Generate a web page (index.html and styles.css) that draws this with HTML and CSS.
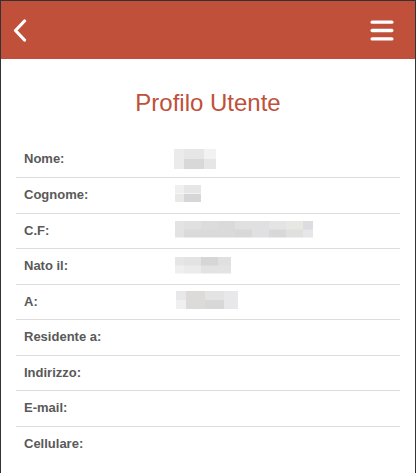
FILE: index.html
```html
<!DOCTYPE html>
<html lang="it">
<head>
<meta charset="utf-8">
<title>Profilo Utente</title>
<link rel="stylesheet" href="styles.css">
</head>
<body>
<div class="frame">
  <header class="topbar">
    <svg class="back" width="14" height="23" viewBox="0 0 14 23" aria-label="Indietro">
      <polyline points="11.5,2 2.5,11.5 11.5,21" fill="none" stroke="#fff" stroke-width="3.2" stroke-linecap="round" stroke-linejoin="round"/>
    </svg>
    <svg class="menu" width="24" height="21" viewBox="0 0 24 21" aria-label="Menu">
      <rect x="0.5" y="0.5" width="23" height="3.3" rx="1.6" fill="#fff"/>
      <rect x="0.5" y="8.85" width="23" height="3.3" rx="1.6" fill="#fff"/>
      <rect x="0.5" y="17.2" width="23" height="3.3" rx="1.6" fill="#fff"/>
    </svg>
  </header>
  <main class="content">
    <h1 class="title">Profilo Utente</h1>
    <table class="profile">
      <tbody>
        <tr><td class="label">Nome:</td><td class="value"><div class="blur blur-nome"></div></td></tr>
        <tr><td class="label">Cognome:</td><td class="value"><div class="blur blur-cognome"></div></td></tr>
        <tr><td class="label">C.F:</td><td class="value"><div class="blur blur-cf"></div></td></tr>
        <tr><td class="label">Nato il:</td><td class="value"><div class="blur blur-nato"></div></td></tr>
        <tr><td class="label">A:</td><td class="value"><div class="blur blur-a"></div></td></tr>
        <tr><td class="label">Residente a:</td><td class="value"></td></tr>
        <tr><td class="label">Indirizzo:</td><td class="value"></td></tr>
        <tr><td class="label">E-mail:</td><td class="value"></td></tr>
        <tr><td class="label">Cellulare:</td><td class="value"></td></tr>
      </tbody>
    </table>
  </main>
</div>
</body>
</html>
```
FILE: styles.css
```css
html, body {
  margin: 0;
  padding: 0;
  background: #fff;
}

body {
  font-family: "Liberation Sans", Arial, sans-serif;
  font-size: 13px;
  line-height: 1.42857;
  color: #555;
}

.frame {
  box-sizing: border-box;
  min-height: 100vh;
  border: 1px solid #333;
  border-bottom: none;
}

.topbar {
  height: 58px;
  background: #c0503a;
  display: flex;
  align-items: center;
  justify-content: space-between;
  padding: 0 21px 0 12px;
}

.topbar svg {
  display: block;
}

.content {
  padding: 0 15px;
}

.title {
  margin: 31px 0 0;
  font-size: 24px;
  line-height: 26px;
  font-weight: normal;
  text-align: center;
  color: #c0503a;
}

.profile {
  width: 100%;
  margin-top: 26px;
  border-collapse: collapse;
  border-spacing: 0;
}

.profile td {
  padding: 8px 8px 8.5px;
  line-height: 18px;
  vertical-align: top;
}

.profile tr + tr td {
  border-top: 1px solid #ddd;
}

.profile .label {
  width: 134px;
  font-weight: bold;
  color: #595959;
}

.blur {
  display: block;
}

.blur-nome {
  width: 42px;
  height: 20px;
  margin-top: -1.5px;
  background:
    linear-gradient(to right, #ebebeb 0 10px, #e6e6e6 10px 30px, #f2f2f2 30px) top / 100% 50% no-repeat,
    linear-gradient(to right, #ebebeb 0 10px, #d8d8d8 10px 30px, #e6e6e6 30px) bottom / 100% 50% no-repeat;
}

.blur-cognome {
  width: 26px;
  height: 17px;
  margin: -1px 0 0 1px;
  background:
    linear-gradient(to right, #efefef 0 9px, #e6e6e6 9px) top / 100% 50% no-repeat,
    linear-gradient(to right, #ebe9e8 0 9px, #d6d6d8 9px) bottom / 100% 50% no-repeat;
}

.blur-cf {
  width: 138px;
  height: 17px;
  margin: -1px 0 0 1px;
  background:
    linear-gradient(to right, #e3e3e3 0 9px, #e0e0e0 9px 26px, #dddbdb 26px 43px, #d8dbd9 43px 60px, #e0e0e0 60px 77px, #e0e0e0 77px 94px, #e3e4e3 94px 111px, #e7e7e4 111px 128px, #dcdde1 128px) top / 100% 50% no-repeat,
    linear-gradient(to right, #e3e3e3 0 9px, #dadada 9px 26px, #dadada 26px 43px, #dadada 43px 60px, #d8d8d8 60px 77px, #e0e0e3 77px 94px, #d8d8d8 94px 111px, #e0e0de 111px 128px, #e6e6e9 128px) bottom / 100% 50% no-repeat;
}

.blur-nato {
  width: 56px;
  height: 17px;
  margin: -0.5px 0 0 1px;
  background:
    linear-gradient(to right, #e6e6e6 0 9px, #e3e3e3 9px 26px, #d6d6d6 26px 43px, #e0e0e0 43px) top / 100% 50% no-repeat,
    linear-gradient(to right, #efefef 0 9px, #ebebeb 9px 26px, #e3e3e3 26px 43px, #e3e3e3 43px) bottom / 100% 50% no-repeat;
}

.blur-a {
  width: 62px;
  height: 18px;
  margin: -2px 0 0 2px;
  background:
    linear-gradient(to right, #e8e8e8 0 10px, #dcdbda 10px 29px, #e3e3e3 29px 48px, #e8e8eb 48px) top / 100% 50% no-repeat,
    linear-gradient(to right, #f0f0f0 0 10px, #dcdbda 10px 29px, #d8d8d8 29px 48px, #e8e8eb 48px) bottom / 100% 50% no-repeat;
}
```
